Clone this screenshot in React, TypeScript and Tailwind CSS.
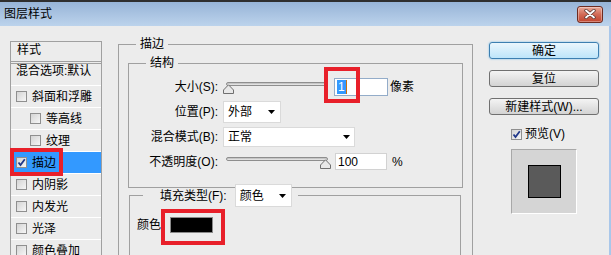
import React from "react";

function Check({ checked }: { checked?: boolean }) {
  return (
    <span className="flex h-[11px] w-[11px] shrink-0 items-center justify-center border border-[#8f8f8f] bg-white">
      <span className="flex h-[9px] w-[9px] items-center justify-center bg-gradient-to-br from-[#d4d4d4] to-[#f6f6f6]">
        {checked && (
          <svg width="9" height="9" viewBox="0 0 9 9">
            <path d="M1.5 4.5L3.5 7L7.8 1.2" fill="none" stroke="#21388a" strokeWidth="1.8" />
          </svg>
        )}
      </span>
    </span>
  );
}

function Arrow() {
  return (
    <svg width="7" height="4" viewBox="0 0 7 4" className="shrink-0">
      <path d="M0 0H7L3.5 4Z" fill="#000" />
    </svg>
  );
}

function Slider({ at }: { at: "start" | "end" }) {
  return (
    <div className="relative h-[14px] w-[108px] shrink-0">
      <div className="mx-[3px] mt-[2px] h-[4px] rounded-full border border-[#8e8e8e] bg-gradient-to-b from-[#b9b9b9] to-[#efefef]" />
      <svg
        className={at === "start" ? "absolute bottom-0 left-0" : "absolute bottom-0 right-0"}
        width="11"
        height="10"
        viewBox="0 0 11 10"
      >
        <path d="M0.5 9.5V6L5.5 0.8L10.5 6V9.5Z" fill="#e8e8e8" stroke="#6f6f6f" strokeLinejoin="round" />
      </svg>
    </div>
  );
}

const styles = [
  { name: "斜面和浮雕" },
  { name: "等高线", indent: true },
  { name: "纹理", indent: true },
  { name: "描边", checked: true, selected: true },
  { name: "内阴影" },
  { name: "内发光" },
  { name: "光泽" },
  { name: "颜色叠加" },
  { name: "渐变叠加" },
];

export default function App() {
  return (
    <div className="flex h-[255px] w-[611px] flex-col overflow-hidden bg-[#ececec] font-['Liberation_Sans','Noto_Sans_CJK_SC',sans-serif] text-[12px] leading-[14px] text-black">
      {/* title bar */}
      <div className="flex h-[26px] shrink-0 items-center justify-between border-t-2 border-[#2e2e2e] bg-gradient-to-b from-[#97b4d7] to-[#bcd3ec] pl-[4px] pr-[8px]">
        <span className="text-[12px]">图层样式</span>
        <div className="flex h-[17px] w-[26px] items-center justify-center rounded-[3px] border border-[#6e2b20] bg-gradient-to-b from-[#e8a898] via-[#d26a55] to-[#c1432d] shadow-[inset_0_0_0_1px_rgba(255,255,255,0.35)]">
          <svg width="12" height="10" viewBox="0 0 12 10">
            <path d="M2 1.5L10 8.5M10 1.5L2 8.5" stroke="#5a3a35" strokeWidth="3.4" strokeLinecap="round" />
            <path d="M2 1.5L10 8.5M10 1.5L2 8.5" stroke="#fff" strokeWidth="1.8" strokeLinecap="round" />
          </svg>
        </div>
      </div>

      <div className="flex flex-1 items-start border-r-2 border-[#a9c7ea]">
        {/* style list */}
        <div className="ml-[10px] mt-[15px] w-[92px] shrink-0 border border-b-0 border-[#a0a0a0]">
          <div className="h-[22px] border-b-[3px] border-double border-[#a0a0a0] pl-[6px] pt-[1px]">样式</div>
          <div className="h-[22px] whitespace-nowrap border-b border-white pl-[5px]">混合选项:默认</div>
          {styles.map((s) => (
            <div
              key={s.name}
              className={
                "relative flex h-[22px] items-center gap-[5px] border-b border-white " +
                (s.indent ? "pl-[19px] " : "pl-[5px] ") +
                (s.selected ? "bg-[#3399ff]" : "")
              }
            >
              <Check checked={s.checked} />
              <span className="whitespace-nowrap">{s.name}</span>
              {s.selected && (
                <div className="absolute -left-[1px] -top-[4px] h-[28px] w-[53px] border-4 border-[#e8202a]" />
              )}
            </div>
          ))}
        </div>

        {/* stroke group */}
        <fieldset className="ml-[16px] mt-[10px] h-[240px] w-[355px] shrink-0 border border-[#a0a0a0]">
          <legend className="ml-[17px] px-[4px] leading-[16px]">描边</legend>

          <fieldset className="ml-[9px] mt-[3px] w-[335px] border border-[#a0a0a0]">
            <legend className="ml-[17px] px-[4px] leading-[16px]">结构</legend>
            <div className="flex flex-col pb-[13px] pt-[3px]">
              <div className="flex h-[25px] items-center">
                <span className="w-[89px] text-right">大小(S):</span>
                <div className="ml-[5px] flex items-center">
                  <Slider at="start" />
                  <div className="relative ml-[3px]">
                    <div className="flex h-[18px] w-[54px] items-center border border-[#93acc9] bg-white pl-[2px]">
                      <span className="border-r border-[#c8700f] bg-[#3399ff] px-[1px] text-white">1</span>
                    </div>
                    <div className="absolute -left-[10px] -top-[11px] h-[36px] w-[36px] border-4 border-[#e8202a]" />
                  </div>
                  <span className="ml-[2px]">像素</span>
                </div>
              </div>

              <div className="flex h-[25px] items-center">
                <span className="w-[89px] text-right">位置(P):</span>
                <div className="ml-[5px] flex h-[22px] w-[58px] items-center justify-between border border-[#dadada] bg-white pl-[4px] pr-[5px]">
                  <span>外部</span>
                  <Arrow />
                </div>
              </div>

              <div className="flex h-[25px] items-center">
                <span className="w-[89px] text-right">混合模式(B):</span>
                <div className="ml-[5px] flex h-[20px] w-[132px] items-center justify-between border border-[#dadada] bg-white pl-[4px] pr-[4px]">
                  <span>正常</span>
                  <Arrow />
                </div>
              </div>

              <div className="flex h-[25px] items-center">
                <span className="w-[89px] text-right">不透明度(O):</span>
                <div className="ml-[5px] flex items-center">
                  <Slider at="end" />
                  <div className="ml-[4px] flex h-[17px] w-[52px] items-center border border-[#d2d2d2] bg-white pl-[2px]">
                    100
                  </div>
                  <span className="ml-[5px]">%</span>
                </div>
              </div>
            </div>
          </fieldset>

          <fieldset className="-mt-[4px] ml-[10px] h-[80px] w-[332px] border border-[#a0a0a0]">
            <legend className="ml-[13px]">
              <div className="flex items-center pl-[17px] pr-[6px]">
                <span>填充类型(F):</span>
                <div className="ml-[8px] flex h-[23px] w-[57px] items-center justify-between border border-[#dadada] bg-white pl-[4px] pr-[5px]">
                  <span>颜色</span>
                  <Arrow />
                </div>
              </div>
            </legend>
            <div className="mt-[8px] flex h-[20px] items-center pl-[7px]">
              <span>颜色</span>
              <div className="relative ml-[9px]">
                <div className="h-[16px] w-[43px] border border-[#8a8a8a] bg-black" />
                <div className="absolute -left-[9px] -top-[8px] h-[36px] w-[64px] border-4 border-[#e8202a]" />
              </div>
            </div>
          </fieldset>
        </fieldset>

        {/* buttons */}
        <div className="ml-[16px] mt-[16px] flex w-[110px] shrink-0 flex-col">
          <div className="flex h-[17px] items-center justify-center rounded-[3px] border border-[#3c7fb1] bg-gradient-to-b from-[#eaf6fd] to-[#bde5fa] shadow-[0_0_2px_#62b6ea]">
            确定
          </div>
          <div className="mt-[11px] flex h-[17px] items-center justify-center rounded-[3px] border border-[#707070] bg-gradient-to-b from-[#f4f4f4] to-[#d3d3d3]">
            复位
          </div>
          <div className="mt-[11px] flex h-[17px] items-center justify-center rounded-[3px] border border-[#707070] bg-gradient-to-b from-[#f4f4f4] to-[#d3d3d3]">
            新建样式(W)...
          </div>
          <div className="ml-[22px] mt-[12px] flex items-center gap-[3px]">
            <Check checked />
            <span>预览(V)</span>
          </div>
          <div className="ml-[22px] mt-[8px] flex h-[65px] w-[66px] items-center justify-center border border-b-white border-l-[#a8a8a8] border-r-white border-t-[#a8a8a8] bg-[#d5d5d5]">
            <div className="h-[33px] w-[33px] border border-black bg-[#5a5a5a]" />
          </div>
        </div>
      </div>
    </div>
  );
}
